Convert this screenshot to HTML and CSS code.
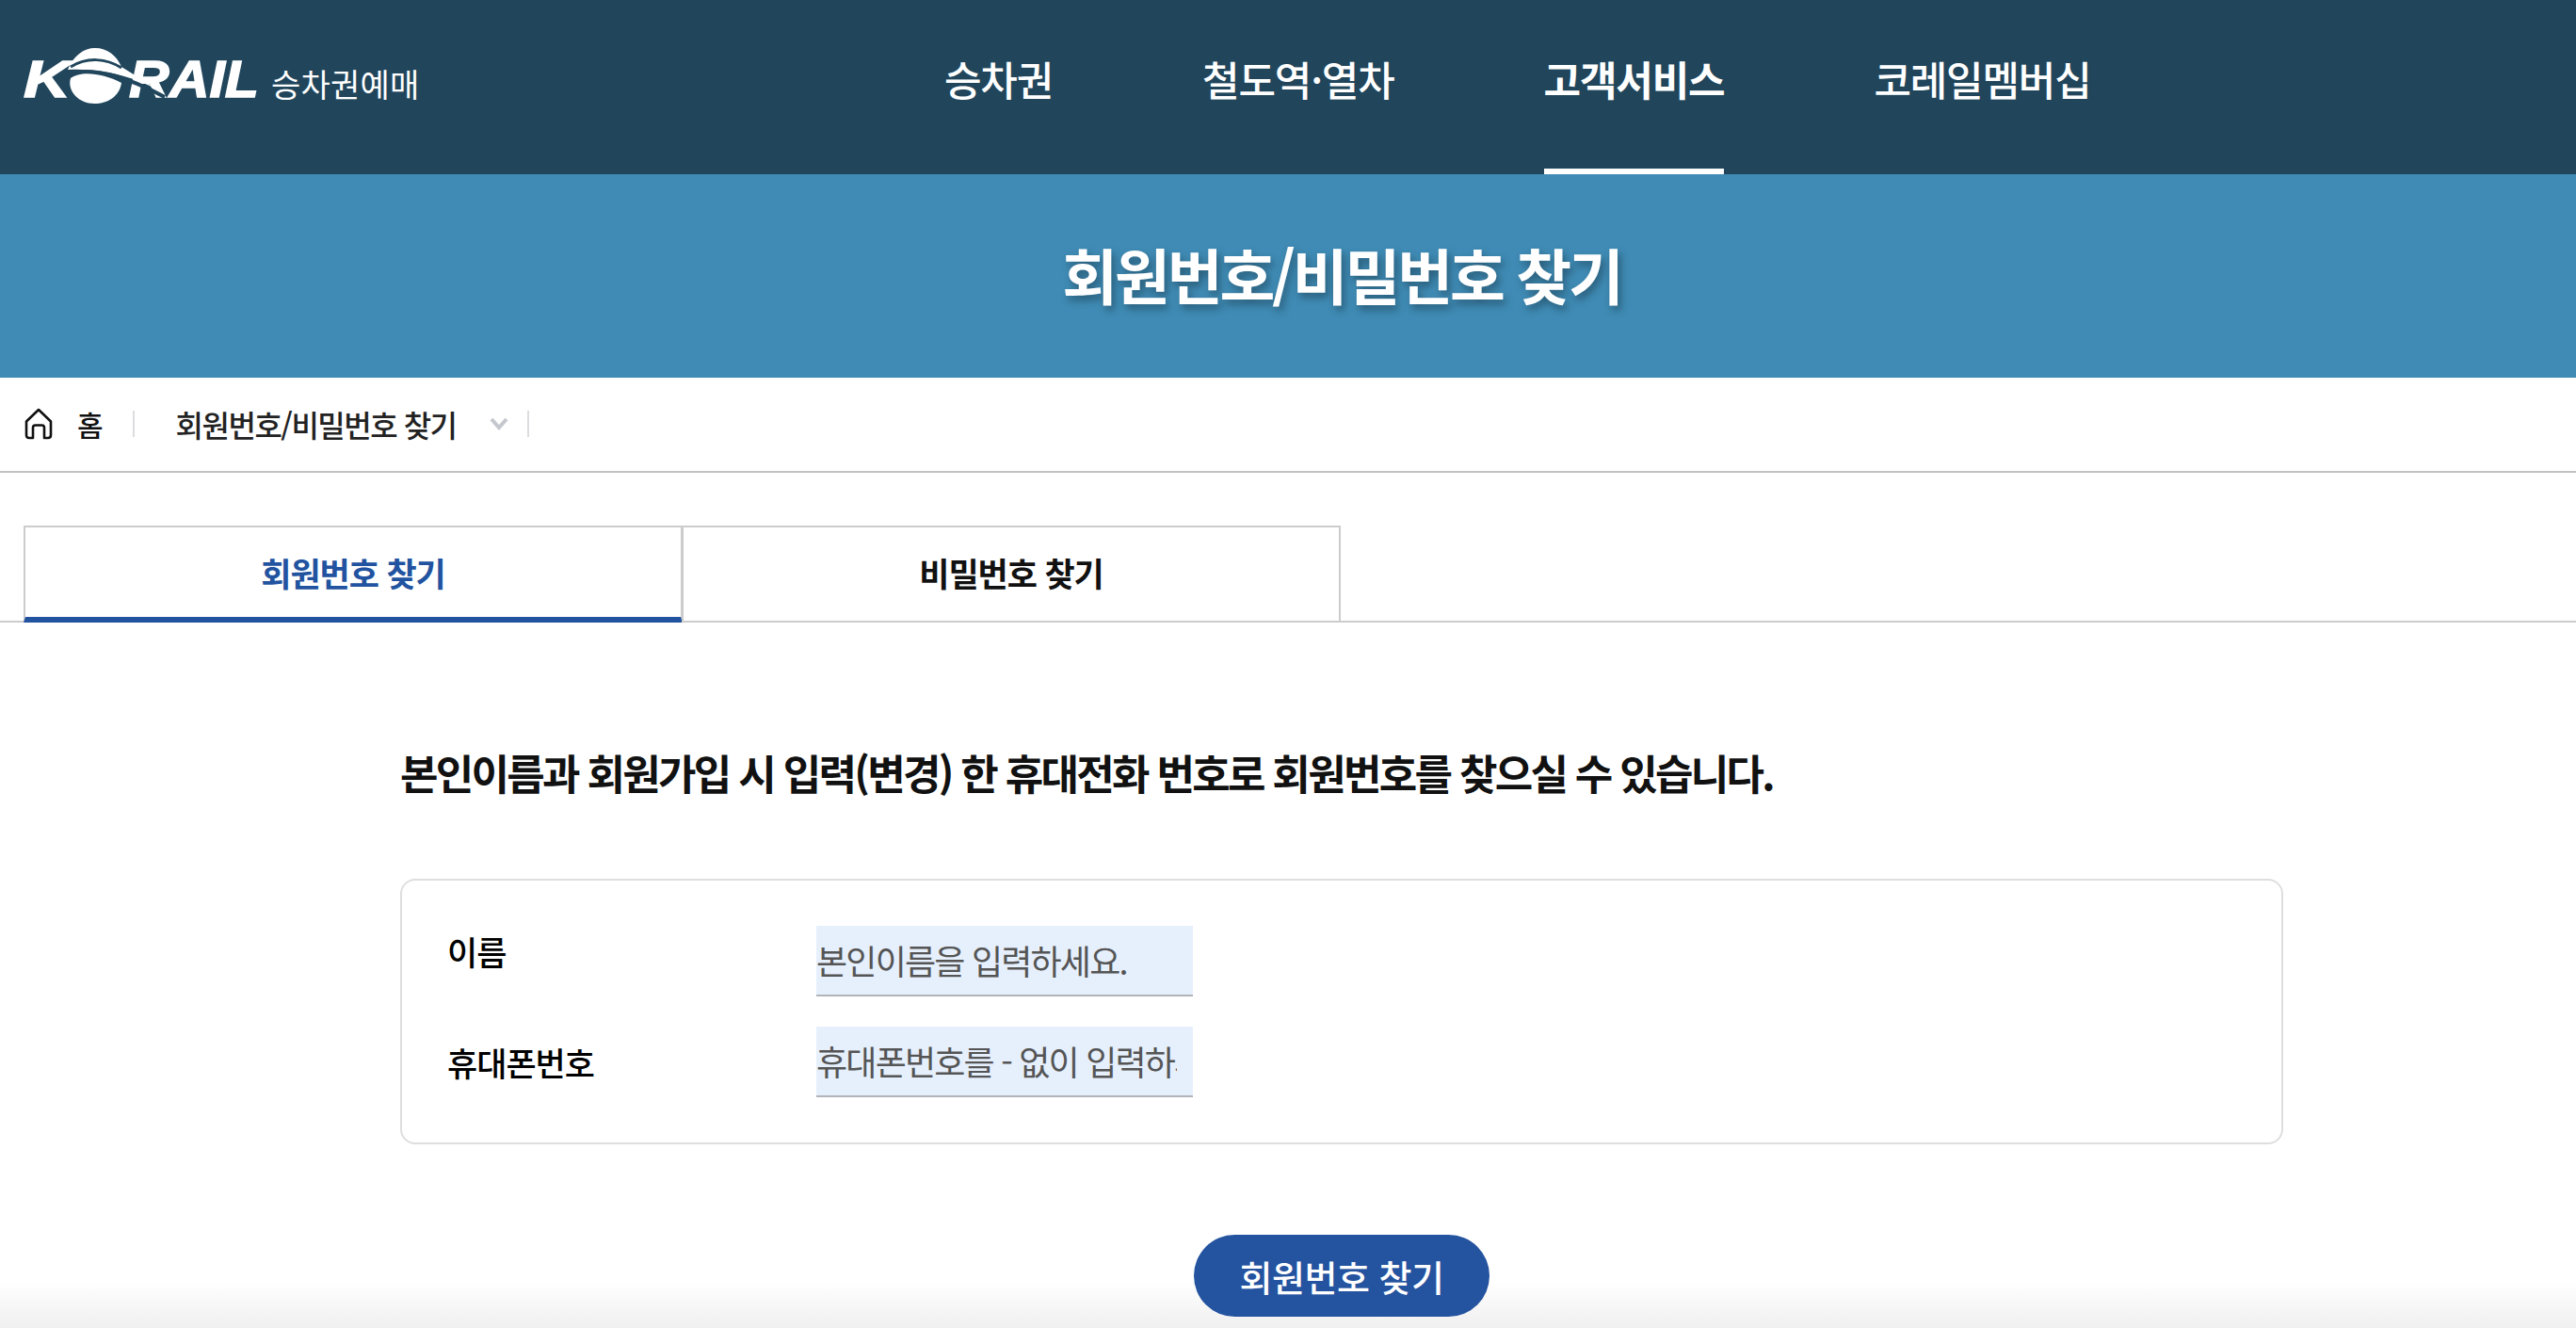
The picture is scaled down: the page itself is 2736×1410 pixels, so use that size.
FILE: index.html
```html
<!DOCTYPE html>
<html lang="ko">
<head>
    <meta charset="UTF-8">
    <meta name="viewport" content="width=device-width, initial-scale=1.0">
    <title>회원번호/비밀번호 찾기</title>
    <link rel="stylesheet" href="styles.css">
</head>
<body>
    <header class="top-bar">
        <a class="logo" href="#">
            <svg class="logo-mark" viewBox="0 -15 250 90" width="250" height="90">
                <text class="logo-letters" x="0" y="53" textLength="50" lengthAdjust="spacingAndGlyphs">K</text>
                <text class="logo-letters" x="112" y="53" textLength="138" lengthAdjust="spacingAndGlyphs">RAIL</text>
                <path fill="#fff" d="M47 24C53 9 64 1 76 1C89 1 99 9 104 21L146 47C118 32 84 22 47 24Z"/>
                <path fill="none" stroke="#21465c" stroke-width="3" d="M50 21C68 10 88 12 104 22"/>
                <path fill="none" stroke="#21465c" stroke-width="4" d="M44 28C82 21 114 34 150 53"/>
                <path fill="#fff" d="M50 33C60 25 84 27 104 38C102 52 90 60 75 60C59 60 46 47 50 33Z"/>
            </svg>
            <span class="logo-sub">승차권예매</span>
        </a>
        <nav class="main-nav">
            <a href="#">승차권</a>
            <a href="#">철도역·열차</a>
            <a href="#" class="active">고객서비스</a>
            <a href="#">코레일멤버십</a>
        </nav>
    </header>

    <div class="page-title">
        <h1>회원번호/비밀번호 찾기</h1>
    </div>

    <div class="breadcrumb">
        <svg class="home-icon" viewBox="0 0 30 34" width="30" height="34">
            <path fill="none" stroke="#111" stroke-width="2.600" stroke-linejoin="round" d="M2 14.500L15 2L28 14.500V29C28 31 27 32 25 32H21V21C21 19.500 20 18.500 18.500 18.500H11.500C10 18.500 9 19.500 9 21V32H5C3 32 2 31 2 29Z"/>
        </svg>
        <span class="crumb-home">홈</span>
        <span class="crumb-sep"></span>
        <span class="crumb-current">회원번호/비밀번호 찾기</span>
        <svg class="crumb-arrow" viewBox="0 0 20 14" width="20" height="14">
            <path fill="none" stroke="#c4c7cd" stroke-width="4" d="M2 2L10 11L18 2"/>
        </svg>
        <span class="crumb-sep"></span>
    </div>

    <div class="tabs">
        <a href="#" class="tab selected">회원번호 찾기</a>
        <a href="#" class="tab">비밀번호 찾기</a>
    </div>

    <main class="content">
        <h2 class="guide">본인이름과 회원가입 시 입력(변경) 한 휴대전화 번호로 회원번호를 찾으실 수 있습니다.</h2>

        <div class="form-box">
            <div class="form-row">
                <label class="form-label first" for="userName">이름</label>
                <input id="userName" class="form-input" type="text" placeholder="본인이름을 입력하세요.">
            </div>
            <div class="form-row">
                <label class="form-label" for="userPhone">휴대폰번호</label>
                <input id="userPhone" class="form-input" type="text" placeholder="휴대폰번호를 - 없이 입력하세요.">
            </div>
        </div>

        <div class="actions">
            <button class="submit-btn">회원번호 찾기</button>
        </div>
    </main>

    <div class="bottom-fade"></div>
</body>
</html>
```

FILE: styles.css
```css
* {
    box-sizing: border-box;
}

html, body {
    height: 1410px;
    overflow: hidden;
}

body {
    margin: 0;
    font-family: "Noto Sans CJK KR", "Noto Sans", sans-serif;
    color: #111;
    background: #fff;
}

a {
    color: inherit;
    text-decoration: none;
}

/* header */
.top-bar {
    display: flex;
    height: 185px;
    padding-left: 25px;
    background: #21465c;
    color: #fff;
}

.logo {
    display: flex;
    align-items: center;
    gap: 13px;
    width: 978px;
    padding-bottom: 25px;
}

.logo-mark {
    flex: none;
}

.logo-letters {
    font-family: "Liberation Sans", sans-serif;
    font-size: 56px;
    font-weight: 700;
    font-style: italic;
    fill: #fff;
    stroke: #fff;
    stroke-width: 1.500px;
}

.logo-sub {
    font-size: 34px;
    line-height: 40px;
    margin-top: 18px;
    letter-spacing: 0.200px;
}

.main-nav {
    display: flex;
    gap: 159px;
}

.main-nav a {
    height: 185px;
    padding-top: 53px;
    font-size: 43px;
    line-height: 60px;
    font-weight: 500;
    letter-spacing: -1.200px;
    color: #fff;
}

.main-nav a.active {
    font-weight: 700;
    border-bottom: 6px solid #fff;
}

/* blue title band */
.page-title {
    height: 216px;
    padding: 0 0 6px 114px;
    background: #3f8bb5;
    display: flex;
    align-items: center;
    justify-content: center;
}

.page-title h1 {
    margin: 0;
    font-size: 64px;
    line-height: 80px;
    font-weight: 700;
    letter-spacing: -3.200px;
    color: #fff;
    text-shadow: 3px 5px 8px rgba(0, 0, 0, 0.35);
}

/* breadcrumb */
.breadcrumb {
    display: flex;
    align-items: center;
    height: 101px;
    padding-left: 26px;
    padding-bottom: 2px;
    border-bottom: 2px solid #c0c2c4;
}

.home-icon {
    margin-right: 26px;
}

.crumb-home {
    font-size: 30px;
    font-weight: 500;
    margin-right: 31px;
}

.crumb-sep {
    width: 2px;
    height: 28px;
    background: #dcdde0;
}

.crumb-current {
    margin-left: 44px;
    margin-right: 35px;
    font-size: 32px;
    font-weight: 500;
    letter-spacing: -1.500px;
    color: #222;
}

.crumb-arrow {
    margin-right: 20px;
}

/* tabs */
.tabs {
    display: flex;
    margin-top: 56px;
    padding-left: 26px;
    height: 103px;
    border-bottom: 2px solid #ccc;
}

.tab {
    width: 700px;
    height: 103px;
    padding-bottom: 4px;
    border: 2px solid #ccc;
    margin-left: -1px;
    display: flex;
    align-items: center;
    justify-content: center;
    font-size: 35px;
    font-weight: 700;
    letter-spacing: -1.100px;
    background: #fff;
    color: #111;
}

.tab.selected {
    padding-bottom: 0;
    border-bottom: 6px solid #2253a0;
    color: #2253a0;
}

/* form */
.content {
    width: 2000px;
    margin-left: 425px;
}

.guide {
    margin: 129px 0 0;
    font-size: 44px;
    line-height: 60px;
    font-weight: 700;
    letter-spacing: -2.700px;
    color: #111;
}

.form-box {
    margin-top: 83px;
    height: 282px;
    padding: 48px 48px 0;
    border: 2px solid #dedede;
    border-radius: 16px;
}

.form-row {
    display: flex;
    align-items: center;
    margin-bottom: 32px;
}

.form-label {
    width: 392px;
    font-size: 35px;
    font-weight: 500;
    letter-spacing: -1px;
    color: #000;
}

.form-label.first {
    padding-bottom: 22px;
}

.form-input {
    width: 400px;
    height: 75px;
    padding: 0 17px 2px 0;
    border: 0;
    border-bottom: 2px solid #b1b4b9;
    border-radius: 0;
    background: #e6f0fd;
    font-family: inherit;
    font-size: 36px;
    letter-spacing: -1.800px;
    outline: none;
}

.form-input::placeholder {
    color: #555;
    opacity: 1;
}

.actions {
    display: flex;
    justify-content: center;
    margin-top: 96px;
}

.submit-btn {
    position: relative;
    z-index: 1;
    width: 314px;
    height: 87px;
    border: 0;
    border-radius: 44px;
    background: #24539f;
    color: #fff;
    font-family: inherit;
    font-size: 38px;
    font-weight: 500;
    letter-spacing: -0.500px;
}

/* soft shade along the bottom of the window */
.bottom-fade {
    position: fixed;
    left: 0;
    right: 0;
    bottom: 0;
    height: 50px;
    background: linear-gradient(rgba(238, 238, 238, 0), rgba(238, 238, 238, 0.9));
    pointer-events: none;
}
```
